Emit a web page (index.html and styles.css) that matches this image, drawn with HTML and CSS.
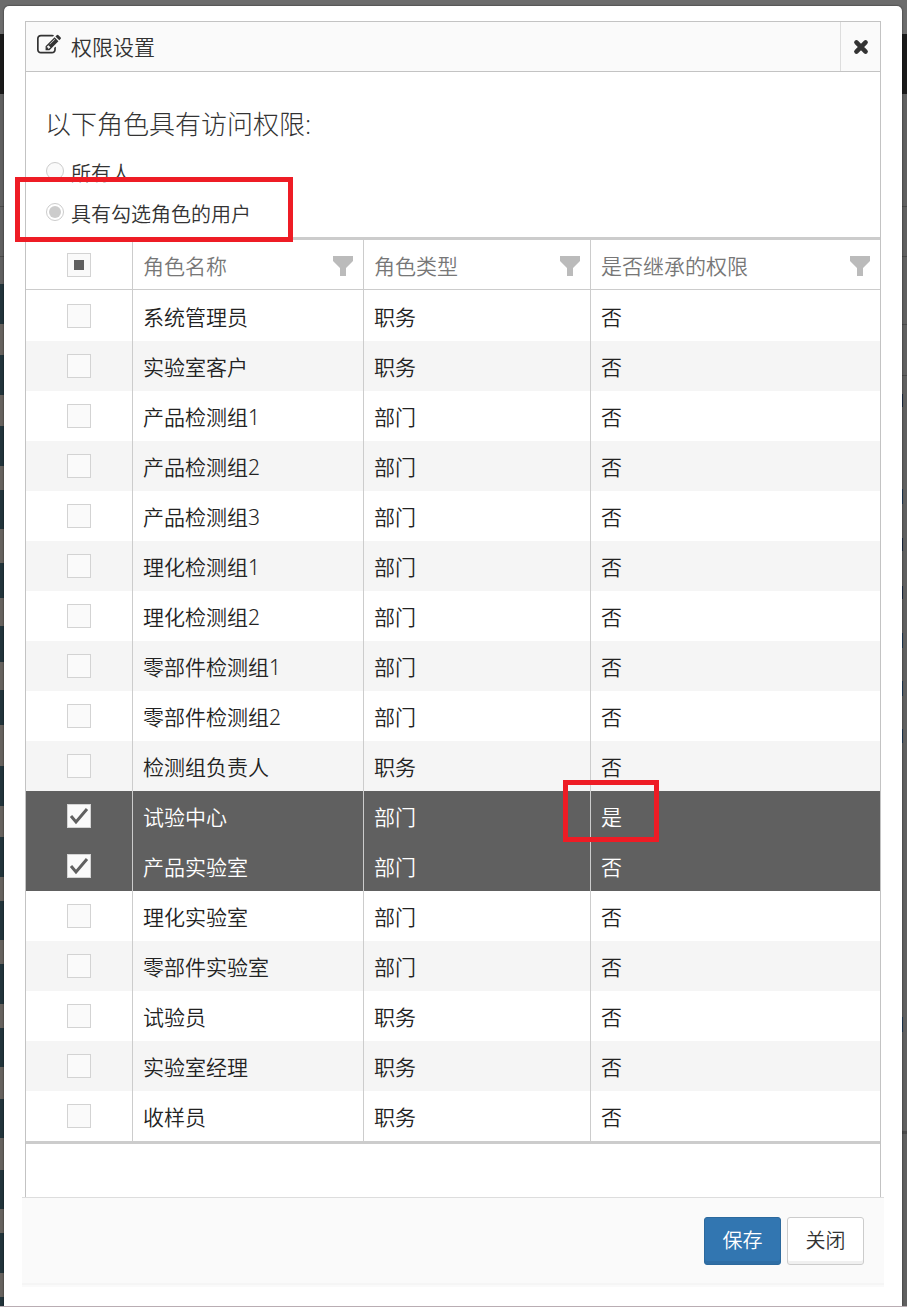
FILE: index.html
```
<!DOCTYPE html>
<html lang="zh-CN">
<head>
  <meta charset="UTF-8">
  <title>权限设置</title>
  <link rel="stylesheet" href="styles.css">
</head>
<body>
<div class="backdrop">
  <div class="backdrop-left"></div>
  <div class="backdrop-right"></div>
</div>

<div class="modal" role="dialog" aria-labelledby="modal-title">
  <div class="panel">
    <div class="panel-header">
      <svg class="icon-edit" viewBox="0 0 1792 1792"><path fill="#333" d="M888 1184l116-116-152-152-116 116v56h96v96h56zm440-720q-16-16-33 1l-350 350q-17 17-1 33t33-1l350-350q17-17 1-33zm80 594v190q0 119-84.500 203.500t-203.500 84.500h-832q-119 0-203.500-84.500t-84.500-203.500v-832q0-119 84.500-203.500t203.500-84.500h832q63 0 117 25 15 7 18 23 3 17-9 29l-49 49q-14 14-32 8-23-6-45-6h-832q-66 0-113 47t-47 113v832q0 66 47 113t113 47h832q66 0 113-47t47-113v-126q0-13 9-22l64-64q15-15 35-7t20 29zm-96-738l288 288-672 672h-288v-288zm444 132l-92 92-288-288 92-92q28-28 68-28t68 28l152 152q28 28 28 68t-28 68z"/></svg>
      <h1 class="panel-title" id="modal-title">权限设置</h1>
      <button type="button" class="close" aria-label="关闭窗口">
        <svg viewBox="0 0 14 14"><path stroke="#333" stroke-width="4" stroke-linecap="round" d="M3 3l8 8M11 3l-8 8"/></svg>
      </button>
    </div>

    <div class="panel-body">
      <h2 class="question">以下角色具有访问权限:</h2>
      <div class="option">
        <input type="radio" name="scope" id="scope-all" disabled>
        <label for="scope-all">所有人</label>
      </div>
      <div class="option">
        <input type="radio" name="scope" id="scope-roles" checked disabled>
        <label for="scope-roles">具有勾选角色的用户</label>
        <span class="mark mark-option"></span>
      </div>
    </div>

    <table class="grid">
      <colgroup>
        <col class="col-check">
        <col class="col-name">
        <col class="col-type">
        <col>
      </colgroup>
      <thead>
        <tr>
          <th class="check"><input type="checkbox" id="check-all" aria-label="全选"></th>
          <th><div class="head">角色名称<svg class="filter" viewBox="0 0 20 20"><path d="M0 0h20v5l-7 7v8H7v-8L0 5z"/></svg></div></th>
          <th><div class="head">角色类型<svg class="filter" viewBox="0 0 20 20"><path d="M0 0h20v5l-7 7v8H7v-8L0 5z"/></svg></div></th>
          <th><div class="head">是否继承的权限<svg class="filter" viewBox="0 0 20 20"><path d="M0 0h20v5l-7 7v8H7v-8L0 5z"/></svg></div></th>
        </tr>
      </thead>
      <tbody>
        <tr><td class="check"><input type="checkbox" aria-label="系统管理员"></td><td>系统管理员</td><td>职务</td><td>否</td></tr>
        <tr><td class="check"><input type="checkbox" aria-label="实验室客户"></td><td>实验室客户</td><td>职务</td><td>否</td></tr>
        <tr><td class="check"><input type="checkbox" aria-label="产品检测组1"></td><td>产品检测组1</td><td>部门</td><td>否</td></tr>
        <tr><td class="check"><input type="checkbox" aria-label="产品检测组2"></td><td>产品检测组2</td><td>部门</td><td>否</td></tr>
        <tr><td class="check"><input type="checkbox" aria-label="产品检测组3"></td><td>产品检测组3</td><td>部门</td><td>否</td></tr>
        <tr><td class="check"><input type="checkbox" aria-label="理化检测组1"></td><td>理化检测组1</td><td>部门</td><td>否</td></tr>
        <tr><td class="check"><input type="checkbox" aria-label="理化检测组2"></td><td>理化检测组2</td><td>部门</td><td>否</td></tr>
        <tr><td class="check"><input type="checkbox" aria-label="零部件检测组1"></td><td>零部件检测组1</td><td>部门</td><td>否</td></tr>
        <tr><td class="check"><input type="checkbox" aria-label="零部件检测组2"></td><td>零部件检测组2</td><td>部门</td><td>否</td></tr>
        <tr><td class="check"><input type="checkbox" aria-label="检测组负责人"></td><td>检测组负责人</td><td>职务</td><td>否</td></tr>
        <tr class="selected"><td class="check"><input type="checkbox" aria-label="试验中心" checked></td><td>试验中心</td><td>部门</td><td class="marked">是<span class="mark mark-cell"></span></td></tr>
        <tr class="selected"><td class="check"><input type="checkbox" aria-label="产品实验室" checked></td><td>产品实验室</td><td>部门</td><td>否</td></tr>
        <tr><td class="check"><input type="checkbox" aria-label="理化实验室"></td><td>理化实验室</td><td>部门</td><td>否</td></tr>
        <tr><td class="check"><input type="checkbox" aria-label="零部件实验室"></td><td>零部件实验室</td><td>部门</td><td>否</td></tr>
        <tr><td class="check"><input type="checkbox" aria-label="试验员"></td><td>试验员</td><td>职务</td><td>否</td></tr>
        <tr><td class="check"><input type="checkbox" aria-label="实验室经理"></td><td>实验室经理</td><td>职务</td><td>否</td></tr>
        <tr><td class="check"><input type="checkbox" aria-label="收样员"></td><td>收样员</td><td>职务</td><td>否</td></tr>
      </tbody>
    </table>
  </div>

  <div class="footer">
    <button type="button" class="btn btn-primary">保存</button>
    <button type="button" class="btn">关闭</button>
  </div>
</div>
<script>
  // some rows are checked, not all
  document.getElementById('check-all').indeterminate = true;
</script>
</body>
</html>
```
FILE: styles.css
```
* {
  box-sizing: border-box;
}

body {
  margin: 0;
  padding: 6px 5px 0 4px;
  min-height: 100vh;
  background: #606060;
  color: #333;
  font-family: "Open Sans", "Noto Sans CJK SC", sans-serif;
  font-size: 21px;
  font-weight: 350;
  border-bottom: 1px solid #b9adb3;
}

/* dimmed page behind the dialog */
.backdrop {
  position: absolute;
  top: 0;
  right: 0;
  bottom: 1px;
  left: 0;
  display: flex;
  justify-content: space-between;
  background: linear-gradient(#6c6c6c 34px, #1a1a1a 34px, #1a1a1a 94px, #606060 94px);
}

.backdrop-left {
  width: 4px;
  background: linear-gradient(
    transparent 206px, #4a4a4a 206px, #4a4a4a 207px, transparent 207px,
    transparent 256px, #4a4a4a 256px, #4a4a4a 257px, transparent 257px,
    transparent 284px, #22343b 284px, #22343b 324px, #66625e 324px,
    #66625e 355px, #22343b 355px, #22343b 395px, #66625e 395px,
    #66625e 426px, #22343b 426px, #22343b 466px, #66625e 466px,
    #66625e 490px, #22343b 490px, #22343b 529px, #66625e 529px,
    #66625e 563px, #22343b 563px, #22343b 598px, #66625e 598px,
    #66625e 626px, #22343b 626px, #22343b 662px, #66625e 662px,
    #66625e 690px, #22343b 690px, #22343b 725px, #66625e 725px,
    #66625e 766px, #22343b 766px, #22343b 806px, #66625e 806px,
    #66625e 837px, #22343b 837px, #22343b 877px, #66625e 877px,
    #66625e 901px, #22343b 901px, #22343b 940px, #66625e 940px,
    #66625e 964px, #22343b 964px, #22343b 1004px, #66625e 1004px,
    #66625e 1028px, #22343b 1028px, #22343b 1067px, #66625e 1067px,
    #66625e 1099px, #22343b 1099px, #22343b 1138px, #66625e 1138px,
    #66625e 1170px, #22343b 1170px, #22343b 1209px, #66625e 1209px,
    #66625e 1233px, #22343b 1233px, #22343b 1273px, #66625e 1273px,
    #66625e 1297px, #22343b 1297px);
}

.backdrop-right {
  width: 5px;
  background: linear-gradient(
    transparent 206px, #4a4a4a 206px, #4a4a4a 207px, transparent 207px,
    transparent 256px, #4a4a4a 256px, #4a4a4a 257px, transparent 257px,
    transparent 324px, #4a4a4a 324px, #4a4a4a 325px, transparent 325px,
    transparent 375px, #4a4a4a 375px, #4a4a4a 376px, transparent 376px,
    transparent 1131px, #4a4a4a 1131px, #4a4a4a 1134px, transparent 1134px);
}

/* clipped edges of the links in the page behind */
.backdrop-right::before {
  content: "";
  display: block;
  width: 1px;
  height: 100%;
  background: linear-gradient(
    transparent 394px, #1c2b44 394px, #1c2b44 407px, transparent 407px,
    transparent 489px, #1f3b59 489px, #1f3b59 504px, transparent 504px,
    transparent 538px, #1c2b44 538px, #1c2b44 551px, transparent 551px,
    transparent 586px, #1c2b44 586px, #1c2b44 599px, transparent 599px,
    transparent 633px, #1f3b59 633px, #1f3b59 648px, transparent 648px,
    transparent 681px, #1f3b59 681px, #1f3b59 696px, transparent 696px,
    transparent 729px, #1f3b59 729px, #1f3b59 743px, transparent 743px,
    transparent 1017px, #1f3b59 1017px, #1f3b59 1032px, transparent 1032px);
}

.modal {
  position: relative;
  min-height: calc(100vh - 7px);
  padding: 15px 21px 19px;
  background: #fff;
  border-radius: 5px 5px 0 0;
  box-shadow: 0 0 2px rgba(0, 0, 0, 0.7);
}

.panel {
  padding-bottom: 53px;
  border: 1px solid #c3c3c3;
  border-bottom: none;
}

.panel-header {
  display: flex;
  align-items: center;
  height: 50px;
  padding-left: 11px;
  background: #fafafa;
  border-bottom: 1px solid #c3c3c3;
}

.icon-edit {
  width: 24px;
  height: 24px;
  margin-bottom: 4px;
}

.panel-title {
  flex: 1;
  margin: 0 0 0 10px;
  font-size: 21px;
  font-weight: 350;
  line-height: 30px;
}

.close {
  display: flex;
  align-items: center;
  justify-content: center;
  align-self: stretch;
  width: 40px;
  padding: 0;
  background: none;
  border: none;
  border-left: 1px solid #ddd;
  cursor: pointer;
}

.close svg {
  width: 16px;
  height: 16px;
}

.panel-body {
  padding: 32px 19px 3px;
}

.question {
  margin: 0 0 8px;
  font-size: 26px;
  font-weight: 300;
  line-height: 40px;
}

.option {
  position: relative;
  display: flex;
  align-items: center;
  height: 41px;
  font-size: 20px;
}

.option input {
  appearance: none;
  width: 18px;
  height: 18px;
  margin: 0 7px 4px 1px;
  background: #fafafa;
  border: 1px solid #ccc;
  border-radius: 50%;
}

.option input:checked {
  background: #ccc;
  background-clip: content-box;
  padding: 2px;
}

/* red review boxes */
.mark {
  position: absolute;
  z-index: 1;
  border: 5px solid #ee1c25;
  pointer-events: none;
}

.mark-option {
  top: -16px;
  left: -30px;
  width: 278px;
  height: 65px;
}

.mark-cell {
  top: -11px;
  left: -28px;
  width: 96px;
  height: 62px;
}

.grid {
  width: 100%;
  table-layout: fixed;
  border-collapse: separate;
  border-spacing: 0;
  border-top: 3px solid #ccc;
  border-bottom: 3px solid #ccc;
}

.col-check {
  width: 106px;
}

.col-name {
  width: 231px;
}

.col-type {
  width: 227px;
}

.grid th,
.grid td {
  height: 50px;
  padding: 0 10px;
  border-left: 1px solid #ccc;
  line-height: 30px;
  text-align: left;
}

.grid th {
  color: #777;
  font-weight: 350;
  border-bottom: 1px solid #ccc;
}

.grid td {
  padding-top: 2px;
  color: #222;
  font-family: "Noto Sans", "Noto Sans CJK SC", sans-serif;
}

.grid tbody tr:first-child td {
  height: 51px;
}

.grid .check {
  padding: 0;
  border-left: none;
  text-align: center;
}

.grid tbody tr:nth-child(even) {
  background: #f5f5f5;
}

.grid tbody tr.selected {
  background: #606060;
}

.grid .selected td {
  color: #fff;
}

.grid .marked {
  position: relative;
}

.head {
  display: flex;
  align-items: center;
  justify-content: space-between;
  padding-top: 2px;
}

.filter {
  width: 20px;
  height: 20px;
  fill: #bbb;
}

.grid input {
  appearance: none;
  display: block;
  position: relative;
  width: 24px;
  height: 24px;
  margin: 0 auto;
  background: #fafafa;
  border: 1px solid #d3d3d3;
}

.grid input:checked {
  background: #fafafa url("data:image/svg+xml,%3Csvg xmlns='http://www.w3.org/2000/svg' viewBox='0 0 22 22'%3E%3Cpath d='M3 11l5 6L19 4' fill='none' stroke='%23606060' stroke-width='3'/%3E%3C/svg%3E") center / 22px 22px no-repeat;
}

.grid input:indeterminate::after {
  content: "";
  position: absolute;
  top: 6px;
  left: 6px;
  width: 10px;
  height: 10px;
  background: #606060;
}

.footer {
  display: flex;
  justify-content: flex-end;
  gap: 6px;
  margin: 0 -3px;
  padding: 19px 20px 22px;
  background: #fafafa;
  border-top: 1px solid #ddd;
  box-shadow: inset 0 -2px 0 #fafafa, inset 0 -4px 0 #f5f5f5;
}

.btn {
  width: 77px;
  height: 48px;
  padding: 0 0 3px;
  background: #fff;
  border: 1px solid #ccc;
  border-radius: 3px;
  box-shadow: inset 0 -3px 0 #f0f0f0;
  color: #333;
  font-family: inherit;
  font-size: 20px;
  font-weight: 350;
  cursor: pointer;
}

.btn-primary {
  background: #3276b1;
  border-color: #2c699d;
  box-shadow: inset 0 -3px 0 #2f6ea5;
  color: #fff;
}
```
